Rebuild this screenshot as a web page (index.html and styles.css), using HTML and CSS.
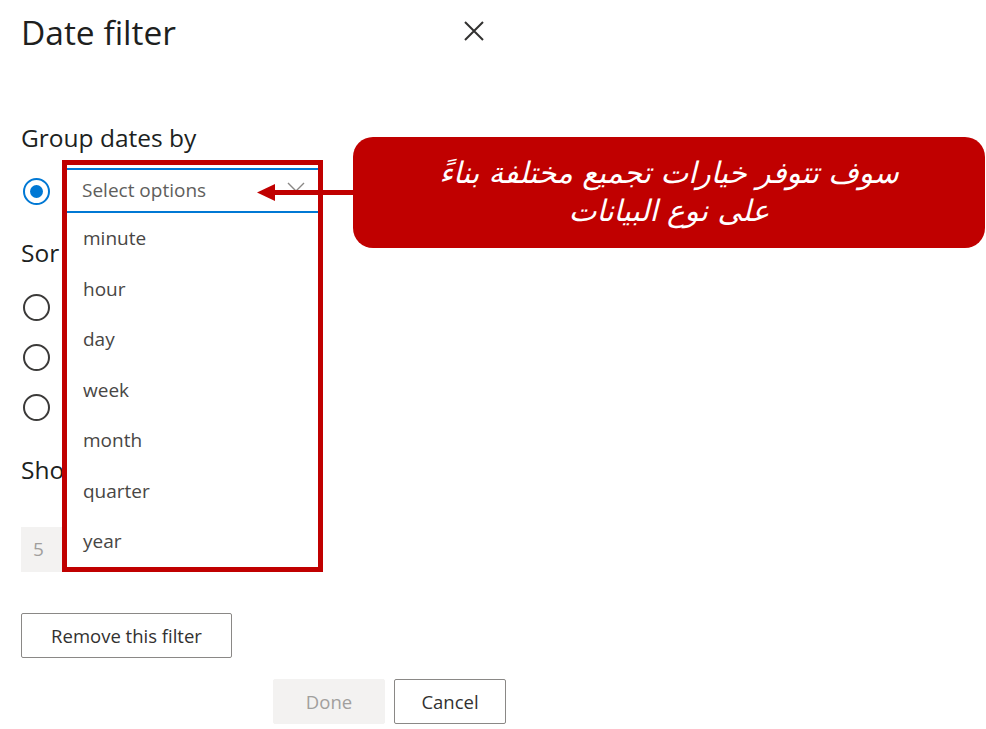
FILE: index.html
```html
<!DOCTYPE html>
<html lang="en">
<head>
<meta charset="utf-8">
<title>Date filter</title>
<link rel="stylesheet" href="styles.css">
</head>
<body>
<div class="page">
  <div class="panel">
    <div class="header">
      <h1 class="title">Date filter</h1>
      <button class="close" aria-label="Close">
        <svg width="20" height="20" viewBox="0 0 20 20"><path d="M1 1 L19 19 M19 1 L1 19" stroke="#323130" stroke-width="2" fill="none"/></svg>
      </button>
    </div>

    <div class="label group-label">Group dates by</div>
    <div class="radio-row first-row"><span class="radio checked"></span></div>

    <div class="label sort-label">Sor</div>
    <div class="sort-list">
      <div class="radio-row"><span class="radio"></span></div>
      <div class="radio-row"><span class="radio"></span></div>
      <div class="radio-row"><span class="radio"></span></div>
    </div>

    <div class="label show-label">Sho</div>
    <div class="number"><span class="num-text">5</span></div>

    <button class="btn remove">Remove this filter</button>

    <div class="footer">
      <button class="btn done">Done</button>
      <button class="btn cancel">Cancel</button>
    </div>
  </div>

  <div class="dropdown">
    <div class="select">
      <span class="placeholder">Select options</span>
      <svg class="chevron" width="18" height="10" viewBox="0 0 18 10"><path d="M1 1 L9 9 L17 1" stroke="#8a8886" stroke-width="1.4" fill="none"/></svg>
    </div>
    <ul class="options">
      <li>minute</li>
      <li>hour</li>
      <li>day</li>
      <li>week</li>
      <li>month</li>
      <li>quarter</li>
      <li>year</li>
    </ul>
  </div>

  <svg class="arrow" width="100" height="22" viewBox="0 0 100 22">
    <rect x="19" y="8" width="81" height="5" fill="#c00000"/>
    <polygon points="2,10.5 20,2 20,19" fill="#c00000"/>
  </svg>

  <div class="callout" dir="rtl" lang="ar">
    <span class="line">سوف تتوفر خيارات تجميع مختلفة بناءً</span>
    <span class="line">على نوع البيانات</span>
  </div>
</div>
</body>
</html>
```

FILE: styles.css
```css
* { box-sizing: border-box; }

html, body {
  margin: 0;
  padding: 0;
  background: #ffffff;
}

body {
  font-family: "Open Sans", "Noto Sans", sans-serif;
  color: #323130;
}

.page {
  position: relative;
  width: 986px;
  height: 729px;
  overflow: hidden;
}

.panel {
  display: flex;
  flex-direction: column;
  align-items: flex-start;
  padding-left: 21px;
  width: 506px;
}

.header {
  display: flex;
  justify-content: space-between;
  align-items: flex-start;
  width: 463px;
  margin-top: 12px;
}

.title {
  margin: 0;
  font-size: 33.5px;
  line-height: 40px;
  font-weight: 400;
  color: #201f1e;
}

.close {
  border: 0;
  background: none;
  padding: 0;
  margin-top: 9px;
  width: 20px;
  height: 20px;
  display: block;
}
.close svg { display: block; }

.label {
  font-size: 24.5px;
  line-height: 32px;
  font-weight: 400;
  color: #201f1e;
  white-space: nowrap;
}

.group-label { margin-top: 70px; }

.radio-row {
  display: flex;
  align-items: center;
  height: 50px;
  padding-left: 2px;
}

.first-row {
  height: 44px;
  margin-top: 15px;
}

.radio {
  width: 27px;
  height: 27px;
  border-radius: 50%;
  border: 2px solid #3b3a39;
  display: flex;
  align-items: center;
  justify-content: center;
  flex: none;
}

.radio.checked { border-color: #0078d4; }
.radio.checked::after {
  content: "";
  width: 13px;
  height: 13px;
  border-radius: 50%;
  background: #0078d4;
}

.sort-label { margin-top: 24px; }
.sort-list { margin-top: 13px; display: flex; flex-direction: column; }

.show-label { margin-top: 22px; }

.number {
  margin-top: 41px;
  width: 41px;
  height: 45px;
  background: #f3f2f1;
  color: #a19f9d;
  font-size: 19px;
  line-height: 45px;
  padding-left: 12px;
}

.btn {
  font-family: "Open Sans", "Noto Sans", sans-serif;
  font-size: 18.5px;
  height: 45px;
  border-radius: 2px;
  background: #ffffff;
  color: #323130;
  border: 1px solid #8a8886;
  padding: 0;
  cursor: pointer;
}

.remove {
  margin-top: 41px;
  width: 211px;
}

.footer {
  display: flex;
  justify-content: flex-end;
  gap: 9px;
  width: 485px;
  margin-top: 21px;
}

.done {
  width: 112px;
  background: #f3f2f1;
  border-color: #f3f2f1;
  color: #a19f9d;
}

.cancel { width: 112px; }

/* Dropdown overlay (annotated with red frame) */
.dropdown {
  position: absolute;
  left: 62px;
  top: 160px;
  width: 261px;
  height: 412px;
  border: 5px solid #c00000;
  background: #ffffff;
  overflow: hidden;
}

.select {
  margin-top: 3px;
  height: 45px;
  border-top: 2px solid #0078d4;
  border-bottom: 2px solid #0078d4;
  display: flex;
  align-items: center;
  justify-content: space-between;
  padding-left: 15px;
  padding-right: 22px;
  width: 260px;
}

.placeholder {
  font-size: 19px;
  line-height: 41px;
  color: #605e5c;
}

.chevron { display: block; margin-top: -8px; }

.options {
  list-style: none;
  margin: 0;
  padding: 0;
}

.options li {
  height: 50.57px;
  line-height: 50.57px;
  padding-left: 16px;
  font-size: 19px;
  color: #484644;
}

.arrow {
  position: absolute;
  left: 255px;
  top: 182px;
  display: block;
}

.callout {
  position: absolute;
  left: 353px;
  top: 137px;
  width: 632px;
  height: 111px;
  border-radius: 20px;
  background: #c00000;
  color: #ffffff;
  display: flex;
  flex-direction: column;
  align-items: center;
  justify-content: center;
  font-family: "DejaVu Sans", "Noto Sans", sans-serif;
  font-style: italic;
  font-size: 29.5px;
  line-height: 38px;
  padding-bottom: 2px;
}

.callout .line { display: block; }
```
